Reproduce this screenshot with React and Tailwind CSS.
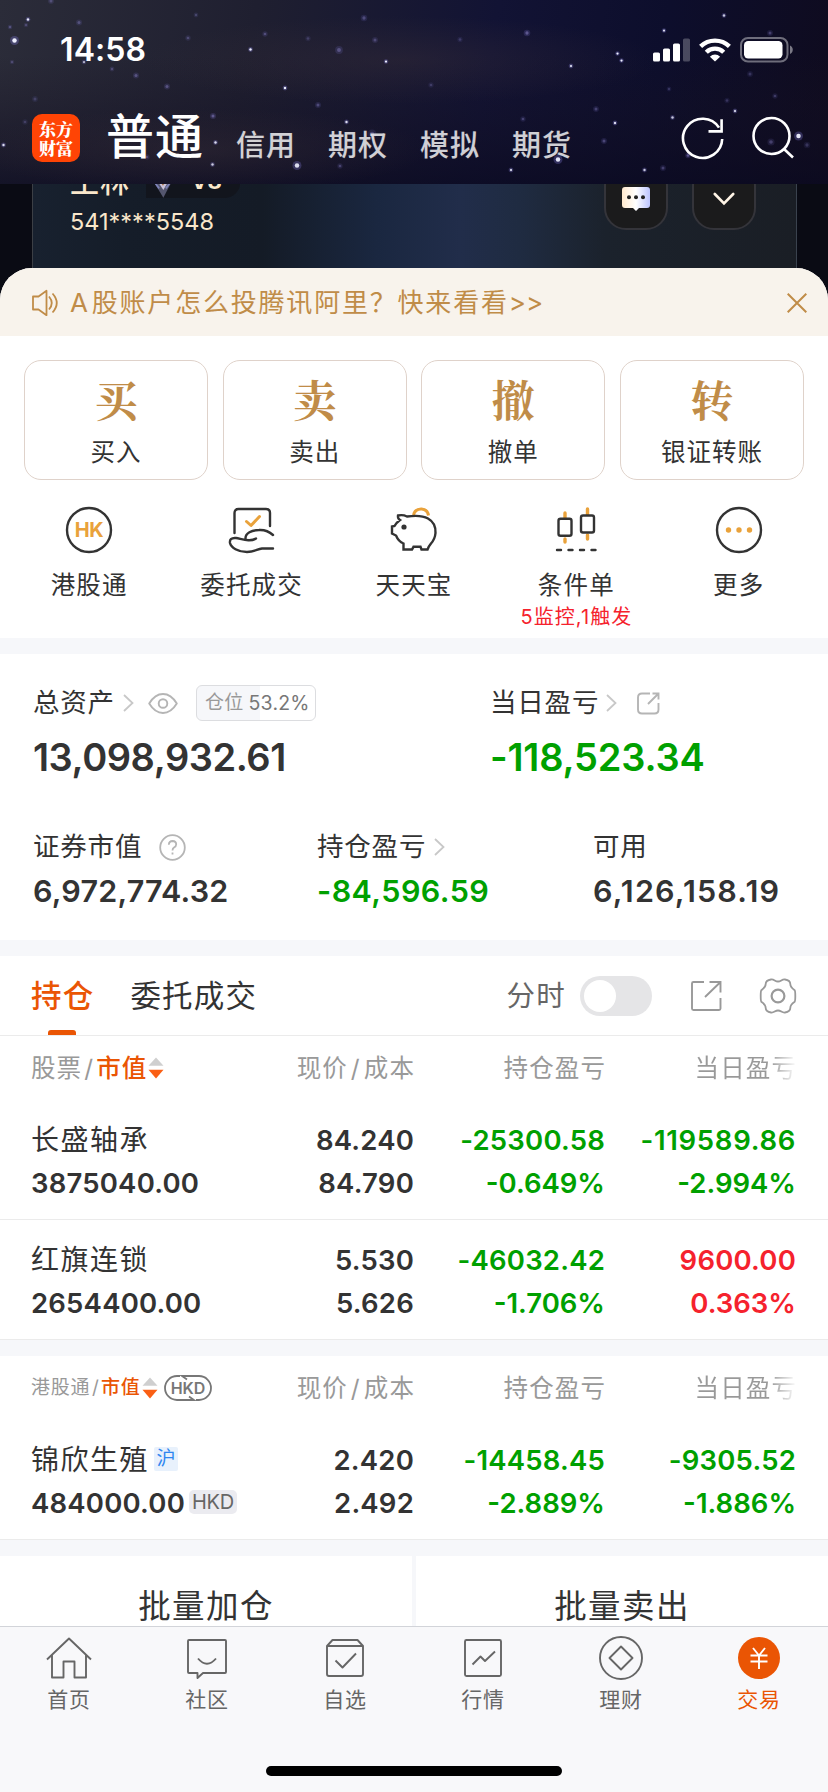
import React from "react";

const FONT = "font-['Inter','Noto_Sans_CJK_SC',sans-serif]";
const SERIF = "font-['Noto_Serif_CJK_SC','Songti_SC','Noto_Sans_CJK_SC',serif]";

const STARS = [
  [28, 19.5, 1.6, 0.95], [14.5, 40.5, 3, 1], [10, 27, 1.5, 0.5], [26, 25, 1.5, 0.4], [79, 22.5, 2, 0.45], [84, 62, 1.5, 0.7],
  [12, 62, 1.5, 0.4], [136, 75.5, 2, 0.5], [112, 69, 1.6, 0.4], [167, 86.5, 2, 0.5], [188, 38, 1.8, 0.4], [196, 15, 1.6, 0.35],
  [250.5, 49.5, 1.6, 1], [265, 34, 1.8, 0.45], [308, 38.5, 1.8, 0.3], [339, 50, 2.6, 0.5], [364, 18, 2.2, 0.45], [375, 40, 2, 0.4],
  [386, 61.5, 1.5, 1], [285, 88, 1.6, 1], [318, 105, 2, 0.45], [346.5, 122, 1.6, 0.9], [297, 165.5, 3, 0.9], [213, 116, 2, 0.6],
  [215.5, 142.5, 1.6, 0.9], [212.5, 164.5, 1.6, 0.8], [3.5, 145, 1.6, 0.9], [35, 99, 2, 0.3], [25, 122, 1.8, 0.3], [147, 157, 1.8, 0.4],
  [527, 33, 2.2, 0.6], [460, 39.5, 1.8, 0.3], [617.5, 53.5, 1.5, 1], [621.5, 60.5, 1.5, 1], [571, 66, 1.6, 0.8], [664, 30.5, 1.5, 0.9],
  [724, 15.5, 1.6, 0.8], [770, 33, 2, 0.4], [750, 74, 2, 0.3], [596, 109, 2, 0.4], [523, 119, 1.8, 0.4], [615, 123, 1.6, 0.9],
  [672.5, 117.5, 1.6, 0.8], [735, 111, 1.6, 0.8], [604, 141, 2, 0.45], [558, 159.5, 3, 0.95], [511, 170, 1.6, 0.8], [644.5, 170, 1.6, 0.8],
  [798.5, 136, 3, 0.95], [771, 142, 2.4, 0.4], [807, 145, 2.2, 0.3], [663, 168, 2, 0.4], [688, 155.5, 1.8, 0.6], [372, 134, 3, 0.4],
  [340, 166, 1.8, 0.4], [775, 96, 1.8, 0.35], [727, 100.5, 1.8, 0.3], [669, 89, 1.6, 0.3], [51, 1, 2, 0.4], [431, 85, 1.8, 0.3],
];

function StatusBar() {
  return (
    <div className="flex h-[98px] items-center justify-between pl-[60px] pr-[34px] pt-[2px]">
      <span className="text-[32px] leading-[32px] font-semibold tracking-[0.1px]">14:58</span>
      <div className="flex items-center">
        <svg width="37" height="24" viewBox="0 0 37 24" fill="#fff">
          <rect x="0" y="14.5" width="7" height="9" rx="1.6" />
          <rect x="10" y="10.5" width="7" height="13" rx="1.6" />
          <rect x="20" y="5.5" width="7" height="18" rx="1.6" />
          <rect x="30" y="0.5" width="7" height="23" rx="1.6" opacity="0.25" />
        </svg>
        <svg className="ml-[9.5px]" width="32" height="24" viewBox="0 0 32 24" fill="none" stroke="#fff" strokeWidth="4.4">
          <path d="M1.6 8.4A20.8 20.8 0 0 1 30.4 8.4" />
          <path d="M7.3 14.2A12.4 12.4 0 0 1 24.7 14.2" />
          <path d="M16 23.6L10.9 18.7A7.2 7.2 0 0 1 21.1 18.7Z" fill="#fff" stroke="none" />
        </svg>
        <svg className="ml-[9px]" width="54" height="26" viewBox="0 0 54 26">
          <rect x="1" y="1" width="46.5" height="23.5" rx="7" fill="none" stroke="#fff" strokeOpacity="0.4" strokeWidth="2" />
          <rect x="4" y="4" width="38.5" height="17.5" rx="4.2" fill="#fff" />
          <path d="M50 8.5C53.7 10 53.7 15.5 50 17Z" fill="#fff" fillOpacity="0.45" />
        </svg>
      </div>
    </div>
  );
}

function Header() {
  return (
    <header className="relative z-10 h-[184px] shrink-0 overflow-hidden bg-[linear-gradient(100deg,#2b2c39_0%,#1f1f30_30%,#121334_58%,#0d0e2c_78%,#0f0b1e_100%)] text-white">
      <svg className="absolute inset-0" width="828" height="184" viewBox="0 0 828 184">
        <defs>
          <linearGradient id="dusk" x1="0" x2="0" y1="0" y2="1">
            <stop offset="0.3" stopColor="#1a1424" stopOpacity="0" />
            <stop offset="1" stopColor="#0b0a20" stopOpacity="0.7" />
          </linearGradient>
          <radialGradient id="haze">
            <stop offset="0" stopColor="#3a2f38" stopOpacity="0.4" />
            <stop offset="1" stopColor="#3a2f38" stopOpacity="0" />
          </radialGradient>
        </defs>
        <rect width="828" height="184" fill="url(#dusk)" />
        <ellipse cx="200" cy="150" rx="230" ry="42" fill="url(#haze)" />
        <ellipse cx="400" cy="60" rx="260" ry="44" fill="url(#haze)" />
        {STARS.map(([x, y, r, o]) => (
          <g key={`${x}-${y}`}>
            <circle cx={x} cy={y} r={r * 1.5} fill="#8880e8" opacity={o * 0.3} />
            <circle cx={x} cy={y} r={r * 0.75} fill={o > 0.65 ? "#eef0ff" : "#7f77b8"} opacity={o} />
          </g>
        ))}
      </svg>
      <div className="relative">
        <StatusBar />
        <div className="flex h-[86px] pl-8 pr-[34px]">
          <div className={`mt-4 flex h-12 w-12 flex-col items-center justify-center rounded-[10px] bg-[#ff4405] ${SERIF} text-[17px] leading-[19.5px] font-black`}>
            <span>东方</span>
            <span>财富</span>
          </div>
          <span className="ml-[26px] mt-[13px] text-[48px] leading-[52px] font-medium tracking-[1px]">普通</span>
          <nav className="ml-[32px] mt-[32px] flex gap-8 text-[29px] leading-8 font-medium tracking-[1px] text-white/80">
            <span>信用</span>
            <span>期权</span>
            <span>模拟</span>
            <span>期货</span>
          </nav>
          <div className="ml-auto mt-[18px] flex gap-[27px]">
            <svg width="43" height="44" viewBox="0 0 43 44" fill="none" stroke="#fff" strokeWidth="2.6">
              <path d="M41.2 23A19.6 19.6 0 1 1 38 11.6" />
              <path d="M40.600 3.2V15.4H27.500" />
            </svg>
            <svg width="43" height="44" viewBox="0 0 43 44" fill="none" stroke="#fff" strokeWidth="2.6">
              <circle cx="20.5" cy="20" r="18" />
              <path d="M33 33L42 41.5" />
            </svg>
          </div>
        </div>
      </div>
    </header>
  );
}

function ProfileCard() {
  return (
    <div className="flex h-[116px] shrink-0 bg-[#0a0b14] pl-8 pr-[31px]">
      <div className="relative flex w-[765px] items-start overflow-hidden border-x border-white/15 bg-[linear-gradient(90deg,#18212f_0%,#151d29_12%,#141b26_30%,#1a2740_45%,#212d4a_56%,#1f2b41_64%,#1b222c_75%,#1a1e25_100%)] pl-[37px]">
        <div className="-mt-4 flex flex-col text-[#f9e7cb]">
          <div className="flex h-[30px] items-center">
            <span className="text-[29px] leading-[30px] font-medium tracking-[1px]">王林</span>
            <div className="ml-4 flex h-[30px] w-[94px] items-center rounded-r-full bg-[#12151d]">
              <svg className="ml-[3px] mt-1" width="27" height="28" viewBox="0 0 32 32">
                <path d="M3 8L29 8L17 31Z" fill="#54566e" />
                <path d="M8 8H25L17 22Z" fill="#c9c2d8" />
                <path d="M11 7H22L16.500 17Z" fill="#a76a2c" />
                <path d="M3 8L12 20M29 8L20 20" stroke="#7d83b8" strokeWidth="2" />
              </svg>
              <span className="ml-[15px] -mt-[4px] text-[22px] leading-6 font-bold">V8</span>
            </div>
          </div>
          <span className="mt-[9px] text-[23.500px] leading-[30px] tracking-[0px]">541****5548</span>
        </div>
        <div className="ml-auto flex gap-[24px] pr-[40px]">
          <div className="-mt-5 flex h-[66px] w-16 items-center justify-center rounded-[22px] border-2 border-[#34343a] bg-[#1b1b1c]">
            <svg className="mt-1" width="28" height="24" viewBox="0 0 28 24">
              <defs>
                <linearGradient id="bubble">
                  <stop offset="0" stopColor="#ffe9cd" />
                  <stop offset="0.5" stopColor="#ffffff" />
                  <stop offset="1" stopColor="#bcc4ff" />
                </linearGradient>
              </defs>
              <path d="M3 0H25Q28 0 28 3V18Q28 21 25 21H17L14 24L11 21H3Q0 21 0 18V3Q0 0 3 0Z" fill="url(#bubble)" />
              <circle cx="7" cy="10.300" r="2" fill="#222" />
              <circle cx="14" cy="10.300" r="2" fill="#222" />
              <circle cx="21" cy="10.300" r="2" fill="#222" />
            </svg>
          </div>
          <div className="-mt-5 flex h-[66px] w-16 items-center justify-center rounded-[22px] border-2 border-[#34343a] bg-[#1b1b1c]">
            <svg className="mt-1" width="22" height="14" viewBox="0 0 22 14" fill="none" stroke="#fff4e6" strokeWidth="2.6" strokeLinecap="round">
              <path d="M1.800 2L11 11.500L20.200 2" />
            </svg>
          </div>
        </div>
      </div>
    </div>
  );
}

function Notice() {
  return (
    <div className="flex h-[68px] items-center bg-[#f8f3ec] pl-8 pr-[21px] pt-[2px] text-[#c08c48]">
      <svg width="26" height="28" viewBox="0 0 26 28" fill="none" stroke="#c08c48" strokeWidth="1.8">
        <path d="M1 7.500H6.500L14.500 1.800V26.200L6.500 20.500H1Z" strokeLinejoin="round" />
        <path d="M17 7.500Q22.500 14 17 20.500M20.500 4.500Q29 14 20.500 23.500" />
      </svg>
      <span className="ml-[12px] text-[26px] leading-8 tracking-[1.8px] whitespace-nowrap"><span className="mr-[2px]">A</span>股账户怎么投腾讯阿里？快来看看<span className="tracking-[0px]">&gt;&gt;</span></span>
      <svg className="ml-auto" width="20" height="20" viewBox="0 0 20 20" stroke="#c08c48" strokeWidth="2">
        <path d="M0.700 0.700L19.300 19.300M19.300 0.700L0.700 19.300" />
      </svg>
    </div>
  );
}

const ACTIONS = [["买", "买入"], ["卖", "卖出"], ["撤", "撤单"], ["转", "银证转账"]];

function Actions() {
  return (
    <div className="grid grid-cols-4 gap-x-[14.6px] px-6 pt-6">
      {ACTIONS.map(([g, t]) => (
        <div key={g} className="flex h-[120px] flex-col items-center rounded-[17px] border border-[#dfd2ca] pt-[15px]">
          <span className={`${SERIF} h-[46px] text-[43px] leading-[46px] font-bold text-[#c08c48]`}>{g}</span>
          <span className="mt-[14px] text-[24.500px] leading-8 tracking-[1px] text-[#333]">{t}</span>
        </div>
      ))}
    </div>
  );
}

function Shortcut({ label, note, children }) {
  return (
    <div className="flex flex-col items-center">
      <svg width="48" height="48" viewBox="0 0 48 48" fill="none" stroke="#333" strokeWidth="2.4" strokeLinecap="round" strokeLinejoin="round">
        {children}
      </svg>
      <span className="mt-[15px] text-[24.500px] leading-8 tracking-[1.200px] text-[#333]">{label}</span>
      {note && <span className="mt-[4px] text-[20px] leading-6 tracking-[1.100px] whitespace-nowrap text-[#f5222d]">{note}</span>}
    </div>
  );
}

function Shortcuts() {
  return (
    <div className="grid h-[158px] grid-cols-5 px-2 pt-[26px]">
      <Shortcut label="港股通">
        <circle cx="24" cy="24" r="22" />
        <text x="24" y="31.300" textAnchor="middle" className="font-['Inter']" fontSize="20" fontWeight="700" fill="#e9a23b" stroke="none" letterSpacing="-0.5">HK</text>
      </Shortcut>
      <Shortcut label="委托成交">
        <path d="M6.500 27V7Q6.500 3 10.500 3H38Q42 3 42 7V20" />
        <path d="M18.500 15.500L23 19.500L31.500 10.500" stroke="#e9a23b" strokeWidth="3" />
        <path d="M17.500 33C17 27 24 24 31 24Q39 23.500 45 29" />
        <path d="M28 32.500C22 36.500 14 33 8 32C3 31.500 1.500 34 2 37C3 41.500 10 46 19 46C27 46 29 43 34 42.500H45" />
      </Shortcut>
      <Shortcut label="天天宝">
        <path d="M23.500 9Q25 2.800 31.500 3Q37.500 3.300 38.500 9.500" stroke="#e9a23b" strokeWidth="3" strokeLinecap="butt" />
        <path d="M8 9.500Q13 8.500 17 10.500Q31 8.500 38 12.500Q46 17 45.500 27Q45 33 41 37.500Q38.500 40.500 37.500 43.500H31.500L30.500 40.800H23.500L22 43.500H13.500V37.500Q8.500 35.500 6 29.500L2 27.500V20.500L4.500 20Q6 17 10 14Q7.500 12.500 8 9.500Z" strokeLinejoin="miter" />
        <circle cx="14" cy="21" r="2.600" fill="#333" stroke="none" />
      </Shortcut>
      <Shortcut label="条件单" note="5监控,1触发">
        <path d="M13 7V13M13 33V36M35.500 3V10M35.500 29V33" stroke="#e9a23b" strokeWidth="3.400" />
        <rect x="6.500" y="12.700" width="13" height="17" rx="2" fill="#fff" />
        <rect x="29" y="9.500" width="13" height="17" rx="2" fill="#fff" />
        <path d="M5 44H9M16.500 44H20.500M28 44H32M39.500 44H43.500" />
      </Shortcut>
      <Shortcut label="更多">
        <circle cx="24" cy="24" r="22" />
        <g fill="#e9a23b" stroke="none">
          <circle cx="13.500" cy="24" r="2.700" />
          <circle cx="24" cy="24" r="2.700" />
          <circle cx="34.500" cy="24" r="2.700" />
        </g>
      </Shortcut>
    </div>
  );
}

const Chevron = ({ className }) => (
  <svg className={className} width="11" height="18" viewBox="0 0 11 18" fill="none" stroke="#c8c8c8" strokeWidth="1.8">
    <path d="M1 1L9.500 9L1 17" />
  </svg>
);

function Assets() {
  return (
    <section className="h-[286px] shrink-0 bg-white text-[26.500px] tracking-[0.800px] text-[#333]">
      <div className="flex pl-[33px] pt-[30px]">
        <div className="w-[457px]">
          <div className="flex h-[38px] items-center">
            <span>总资产</span>
            <Chevron className="ml-2" />
            <svg className="ml-[14.500px]" width="30" height="21" viewBox="0 0 30 21" fill="none" stroke="#b5b5b5" strokeWidth="1.900">
              <path d="M1.200 10.500Q7 1 15 1Q23 1 28.800 10.500Q23 20 15 20Q7 20 1.200 10.500Z" strokeLinejoin="round" />
              <circle cx="15" cy="10.500" r="4.300" />
            </svg>
            <div className="ml-[17.500px] flex h-9 w-[120px] items-center rounded-[6px] border border-[#dcdde0] bg-[linear-gradient(90deg,#f6f7fa_53.2%,#fff_53.200%)] pl-2 text-[19px] leading-6 tracking-[0.300px] whitespace-nowrap text-[#999]">
              <span>仓位</span>
              <span className="ml-[5px] text-[19.500px] tracking-[0.200px] text-[#777]">53.2%</span>
            </div>
          </div>
          <div className="mt-[14px] text-[38px] leading-[42px] font-semibold tracking-[-0.450px]">13,098,932.61</div>
        </div>
        <div>
          <div className="flex h-[38px] items-center">
            <span>当日盈亏</span>
            <Chevron className="ml-[7px]" />
            <svg className="ml-[20px]" width="23" height="23" viewBox="0 0 23 23" fill="none" stroke="#b5b5b5" strokeWidth="1.900">
              <path d="M13 1.500H5Q1 1.500 1 5.500V17.500Q1 21.500 5 21.500H17.500Q21.500 21.500 21.500 17.500V11" />
              <path d="M15.500 1.500H21.500V7.500M21 2L11 12" />
            </svg>
          </div>
          <div className="mt-[14px] text-[38px] leading-[42px] font-semibold tracking-[-0.200px] text-[#00a000]">-118,523.34</div>
        </div>
      </div>
      <div className="mt-[49px] flex pl-[33px]">
        <div className="w-[284px]">
          <div className="flex h-10 items-center">
            <span>证券市值</span>
            <svg className="ml-[17px]" width="27" height="27" viewBox="0 0 27 27" fill="none" stroke="#b5b5b5" strokeWidth="1.800">
              <circle cx="13.500" cy="13.500" r="12.300" />
              <path d="M9.800 10.800Q10 7 13.600 7Q17.200 7.200 17.200 10.300Q17.200 12.300 15 13.600Q13.500 14.600 13.500 16.500M13.500 18.500V20.500" />
            </svg>
          </div>
          <div className="mt-[3.500px] text-[30.500px] leading-10 font-semibold tracking-[0.200px]">6,972,774.32</div>
        </div>
        <div className="w-[276px]">
          <div className="flex h-10 items-center">
            <span>持仓盈亏</span>
            <Chevron className="ml-[8px]" />
          </div>
          <div className="mt-[3.500px] text-[30.500px] leading-10 font-semibold tracking-[0.450px] text-[#00a000]">-84,596.59</div>
        </div>
        <div>
          <div className="flex h-10 items-center">可用</div>
          <div className="mt-[3.500px] text-[30.500px] leading-10 font-semibold tracking-[1.150px]">6,126,158.19</div>
        </div>
      </div>
    </section>
  );
}

function HoldingTabs() {
  return (
    <div className="flex h-20 shrink-0 border-b border-[#ebebeb] bg-white pl-[31px] pr-[31px] text-[30.500px] leading-10 tracking-[1.200px]">
      <div className="flex flex-col items-center pt-5 font-medium text-[#ea5504]">
        <span>持仓</span>
        <span className="mt-[14px] mr-[2px] h-[5px] w-7 rounded-t-[3px] bg-[#ea5504]" />
      </div>
      <span className="ml-[36px] mt-5 text-[#333]">委托成交</span>
      <div className="ml-auto flex items-center text-[28.500px] text-[#666]">
        <span>分时</span>
        <span className="ml-[14px] flex h-10 w-[72px] items-center rounded-full bg-[#e5e5e7] pl-1">
          <span className="h-8 w-8 rounded-full bg-white" />
        </span>
        <svg className="ml-[38px]" width="32" height="32" viewBox="0 0 32 32" fill="none" stroke="#999" strokeWidth="1.900">
          <path d="M14 2H3.500Q2 2 2 3.500V28.500Q2 30 3.500 30H29Q30.500 30 30.500 28.500V18" />
          <path d="M19.500 2H30.500V12.500M30 2.500L15 17" />
        </svg>
        <svg className="ml-[37px]" width="38" height="38" viewBox="-19 -19 38 38" fill="none" stroke="#999" strokeWidth="1.800" strokeLinejoin="round">
          <path d="M0 -14.500C3 -14.500 4 -17 7 -16.500C10 -16 12.300 -14.200 12.300 -12C12.300 -8.800 14.300 -7.500 16.500 -6C17.300 -5.400 17.300 -3 17.300 0C17.300 3 17.300 5.400 16.500 6C14.300 7.500 12.300 8.800 12.300 12C12.300 14.200 10 16 7 16.500C4 17 3 14.500 0 14.500C-3 14.500 -4 17 -7 16.500C-10 16 -12.300 14.200 -12.300 12C-12.300 8.800 -14.300 7.500 -16.500 6C-17.300 5.400 -17.300 3 -17.300 0C-17.300 -3 -17.300 -5.400 -16.500 -6C-14.300 -7.500 -12.300 -8.800 -12.300 -12C-12.300 -14.200 -10 -16 -7 -16.500C-4 -17 -3 -14.500 0 -14.500Z" />
          <circle cx="0" cy="0" r="6.400" strokeWidth="2.200" />
        </svg>
      </div>
    </div>
  );
}

const Sort = () => (
  <svg className="ml-[1px]" width="16" height="22" viewBox="0 0 16 22">
    <path d="M8 0.500L15.500 8.800H0.500Z" fill="#cfcfcf" />
    <path d="M8 21.500L0.500 12.800H15.500Z" fill="#fa5f14" />
  </svg>
);

const COLS = "grid grid-cols-[264px_119px_191px_191px]";

function TableHead({ children }) {
  return (
    <div className={`${COLS} h-16 shrink-0 items-center bg-white pl-[31px] text-[24.500px] leading-8 tracking-[1.100px] whitespace-nowrap text-[#999]`}>
      {children}
      <span className="-mr-px text-right">现价<span className="mx-[3px]">/</span>成本</span>
      <span className="-mr-px text-right">持仓盈亏</span>
      <span className="-mr-px bg-[linear-gradient(90deg,#999_86%,#fff_100%)] bg-clip-text text-right text-transparent">当日盈亏</span>
    </div>
  );
}

function Holding({ name, value, tags, price, cost, pl, plPct, day, dayPct, up, wide }) {
  return (
    <div className={`${COLS} h-[120px] shrink-0 border-b border-[#ebebeb] bg-white pl-[31px] pt-[19px] text-[27.500px] leading-[43px] font-semibold tracking-[0.200px] whitespace-nowrap text-[#333]`}>
      <div>
        <div className="flex h-[43px] items-center">
          <span className="text-[28px] font-normal tracking-[1.500px]">{name}</span>
          {tags && <span className="ml-[5px] -mt-1 h-6 w-6 rounded-[2px] bg-[#e8f1fc] text-center text-[19px] leading-6 font-normal text-[#2f86f0]">沪</span>}
        </div>
        <div className="flex h-[43px] items-center">
          <span>{value}</span>
          {tags && <span className="ml-[4px] -mt-1 h-6 w-12 rounded-[5px] bg-[#ebebf0] text-center text-[20px] leading-[25px] font-normal tracking-[-0.200px] text-[#666]">HKD</span>}
        </div>
      </div>
      <div className="text-right">
        <div>{price}</div>
        <div>{cost}</div>
      </div>
      <div className="text-right text-[#00a000]">
        <div>{pl}</div>
        <div className="tracking-[0px]">{plPct}</div>
      </div>
      <div className={up ? "text-right text-[#f5222d]" : "text-right text-[#00a000]"}>
        <div className={wide ? "tracking-[0.700px]" : ""}>{day}</div>
        <div className="tracking-[0px]">{dayPct}</div>
      </div>
    </div>
  );
}

function Tab({ label, active, children }) {
  return (
    <div className={active ? "flex flex-col items-center text-[#ea5504]" : "flex flex-col items-center text-[#666]"}>
      <svg width="46" height="46" viewBox="0 0 46 46" fill="none" stroke="#666" strokeWidth="1.900" strokeLinejoin="round">
        {children}
      </svg>
      <span className="mt-[5px] text-[21px] leading-7 tracking-[0.800px]">{label}</span>
    </div>
  );
}

function TabBar() {
  return (
    <footer className="flex h-[166px] shrink-0 flex-col items-center border-t border-[#d2d4d9] bg-[#f8f8fa]">
      <div className="grid w-full grid-cols-6 pt-2">
        <Tab label="首页">
          <path d="M1 24.500L23 3.500L45 24.500M6 20V42.500H17.500V26.500H28.500V42.500H40V20" />
        </Tab>
        <Tab label="社区">
          <path d="M5 5H41Q42 5 42 6V37Q42 38 41 38H19L13.500 43V38H5Q4 38 4 37V6Q4 5 5 5Z" />
          <path d="M14 23.500Q23 34 32 23.500" />
        </Tab>
        <Tab label="自选">
          <path d="M5 11L10.500 5H35.500L41 11V39Q41 41 39 41H7Q5 41 5 39ZM5 11H41" />
          <path d="M13.500 25.500L20.500 32.500L34 18.500" />
        </Tab>
        <Tab label="行情">
          <rect x="5" y="5" width="36" height="36" rx="1.500" />
          <path d="M12.500 29.500L20.500 21.500L25 26L35 16.500" />
        </Tab>
        <Tab label="理财">
          <circle cx="23" cy="23" r="21" />
          <path d="M23 11.500L34.500 23L23 34.500L11.500 23Z" />
        </Tab>
        <Tab label="交易" active>
          <circle cx="23" cy="23" r="21" fill="#ea5504" stroke="none" />
          <path d="M17 13L23 20.500L29 13M23 20.500V34M14.500 20.500H31.500M14.500 26.500H31.500" stroke="#fff" />
        </Tab>
      </div>
      <div className="mt-[52px] h-[10px] w-[296px] rounded-full bg-black" />
    </footer>
  );
}

export default function App() {
  return (
    <div className={`flex h-[1792px] w-[828px] flex-col overflow-hidden bg-[#f6f7fa] ${FONT}`}>
      <Header />
      <ProfileCard />
      <section className="relative -mt-8 h-[370px] shrink-0 overflow-hidden rounded-t-[32px] bg-white">
        <Notice />
        <Actions />
        <Shortcuts />
      </section>
      <div className="h-4 shrink-0" />
      <Assets />
      <div className="h-4 shrink-0" />
      <HoldingTabs />
      <TableHead>
        <span className="flex items-center">
          股票<span className="mr-[2px] ml-[2px]">/</span>
          <span className="font-medium text-[#ea5504]">市值</span>
          <Sort />
        </span>
      </TableHead>
      <Holding wide name="长盛轴承" value="3875040.00" price="84.240" cost="84.790" pl="-25300.58" plPct="-0.649%" day="-119589.86" dayPct="-2.994%" />
      <Holding name="红旗连锁" value="2654400.00" price="5.530" cost="5.626" pl="-46032.42" plPct="-1.706%" day="9600.00" dayPct="0.363%" up />
      <div className="h-4 shrink-0" />
      <TableHead>
        <span className="flex items-center text-[19px] tracking-[0.800px]">
          港股通<span className="mx-[1.500px]">/</span>
          <span className="font-medium text-[#ea5504]">市值</span>
          <Sort />
          <svg className="ml-[6px]" width="48" height="26" viewBox="0 0 48 26" fill="none" stroke="#777" strokeWidth="1.800">
            <path d="M16 1H13A12 12 0 0 0 13 25H30L25 21.500" />
            <path d="M32 25H35A12 12 0 0 0 35 1H18L23 4.500" />
            <text x="24" y="18.800" textAnchor="middle" className="font-['Inter']" fontSize="16" fontWeight="600" fill="#777" stroke="none" letterSpacing="0">HKD</text>
          </svg>
        </span>
      </TableHead>
      <Holding tags name="锦欣生殖" value="484000.00" price="2.420" cost="2.492" pl="-14458.45" plPct="-2.889%" day="-9305.52" dayPct="-1.886%" />
      <div className="h-4 shrink-0" />
      <div className="grid h-[70px] shrink-0 grid-cols-2 gap-1 overflow-hidden text-center text-[32.500px] leading-[101px] tracking-[1.400px] text-[#333]">
        <span className="bg-white">批量加仓</span>
        <span className="bg-white">批量卖出</span>
      </div>
      <TabBar />
    </div>
  );
}
